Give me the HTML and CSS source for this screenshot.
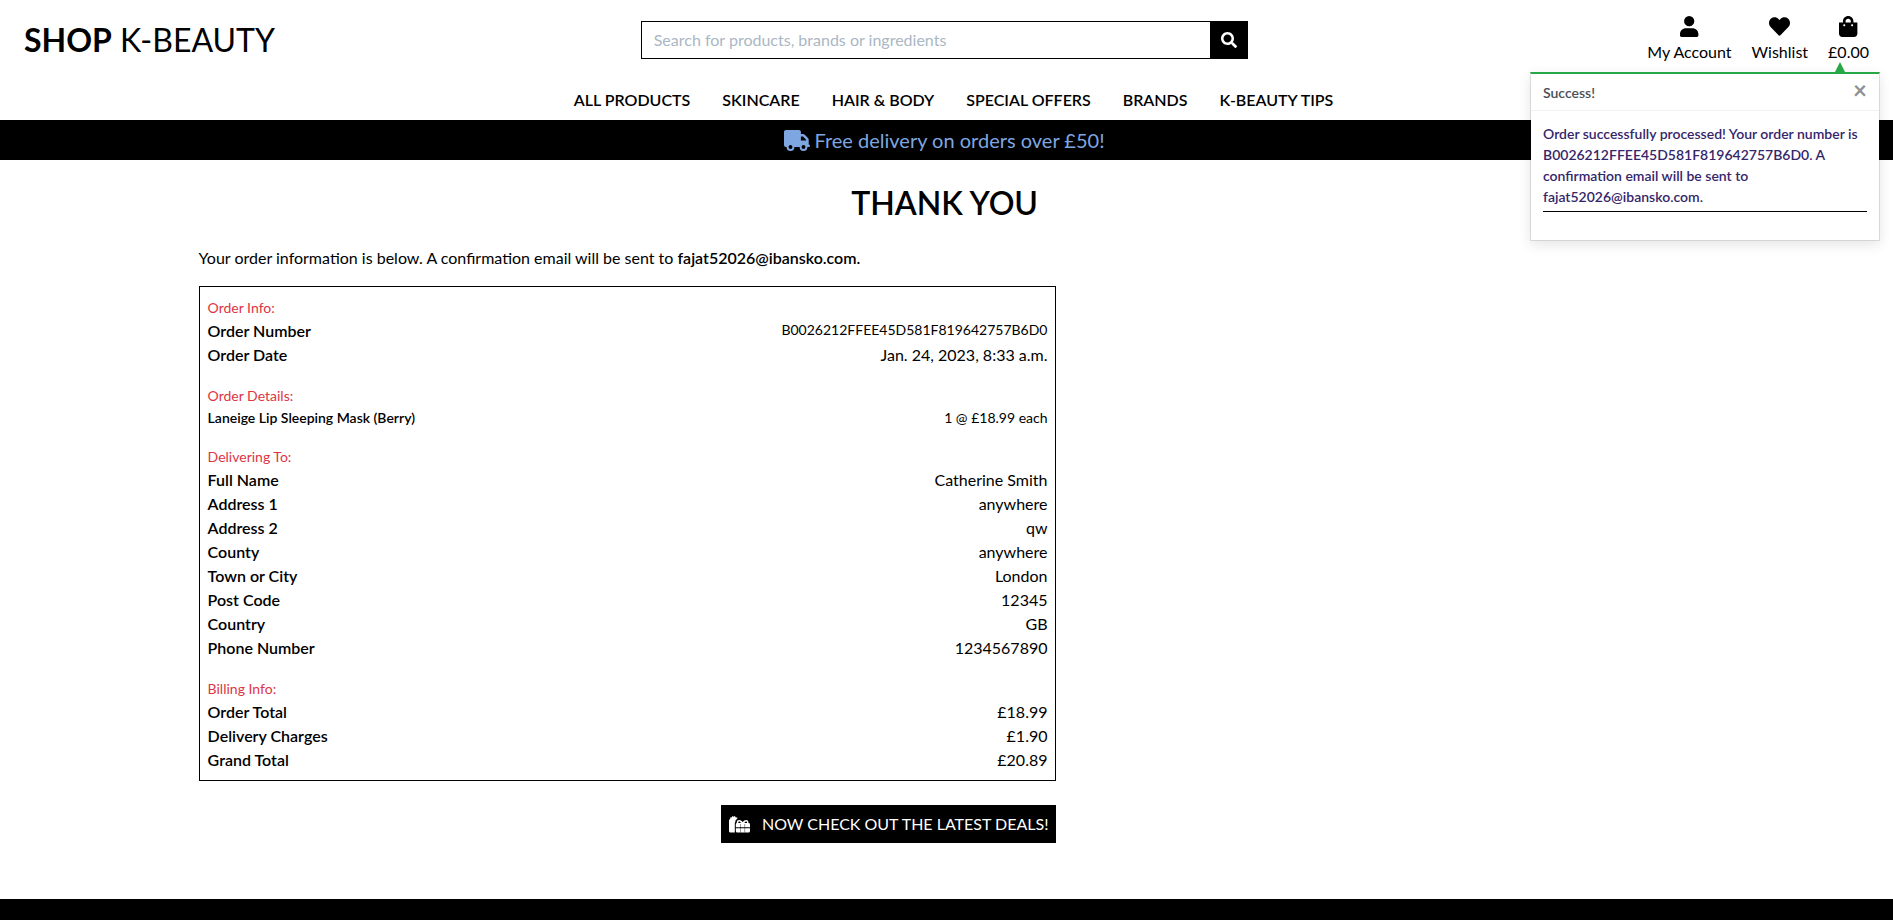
FILE: index.html
```html
<!DOCTYPE html>
<html lang="en">
<head>
<meta charset="utf-8">
<title>Shop K-Beauty</title>
<link rel="stylesheet" href="styles.css">
</head>
<body>
<header class="site-header">
  <div class="topbar">
    <a class="logo" href="#"><strong>SHOP</strong> K-BEAUTY</a>
    <form class="search">
      <input class="search-input" type="text" aria-label="Search" placeholder="Search for products, brands or ingredients">
      <button class="search-button" type="button" aria-label="Search">
        <svg class="icon-search" viewBox="0 0 512 512"><path d="M505 442.7L405.3 343c-4.500-4.500-10.600-7-17-7H372c27.600-35.300 44-79.700 44-128C416 93.100 322.900 0 208 0S0 93.100 0 208s93.100 208 208 208c48.300 0 92.700-16.400 128-44v16.300c0 6.400 2.500 12.500 7 17l99.700 99.700c9.400 9.400 24.600 9.400 33.900 0l28.300-28.300c9.400-9.400 9.400-24.600.1-34zM208 336c-70.700 0-128-57.200-128-128 0-70.700 57.200-128 128-128 70.700 0 128 57.200 128 128 0 70.700-57.200 128-128 128z"/></svg>
      </button>
    </form>
    <div class="account-links">
      <a class="account-link" href="#">
        <svg class="icon-account" viewBox="0 0 448 512"><path d="M224 250a125 125 0 1 0 0-250 125 125 0 1 0 0 250zM150 296C60 296 0 356 0 440v38c0 20 14 34 34 34h380c20 0 34-14 34-34v-38c0-84-60-144-150-144z"/></svg>
        <span>My Account</span>
      </a>
      <a class="account-link" href="#">
        <svg class="icon-account" viewBox="0 0 512 512"><path d="M462.300 62.600C407.500 15.900 326 24.300 275.700 76.200L256 96.500l-19.700-20.300C186.100 24.300 104.500 15.900 49.700 62.600c-62.800 53.600-66.100 149.800-9.900 207.900l193.500 199.800c12.500 12.900 32.800 12.900 45.300 0l193.500-199.800c56.300-58.100 53-154.300-9.800-207.900z"/></svg>
        <span>Wishlist</span>
      </a>
      <a class="account-link" href="#">
        <svg class="icon-account" viewBox="0 0 448 512"><path d="M352 160v-32C352 57.400 294.600 0 224 0 153.400 0 96 57.400 96 128v32H0v272c0 44.200 35.800 80 80 80h288c44.200 0 80-35.800 80-80V160h-96zm-192-32c0-35.300 28.700-64 64-64s64 28.700 64 64v32H160v-32zm160 120c-13.300 0-24-10.700-24-24s10.700-24 24-24 24 10.700 24 24-10.700 24-24 24zm-192 0c-13.300 0-24-10.700-24-24s10.700-24 24-24 24 10.700 24 24-10.700 24-24 24z"/></svg>
        <span>£0.00</span>
      </a>
    </div>
  </div>
  <nav class="main-nav">
    <a href="#">ALL PRODUCTS</a>
    <a href="#">SKINCARE</a>
    <a href="#">HAIR &amp; BODY</a>
    <a href="#">SPECIAL OFFERS</a>
    <a href="#">BRANDS</a>
    <a href="#">K-BEAUTY TIPS</a>
  </nav>
  <section class="toast" role="alert">
    <div class="toast-header">
      <span>Success!</span>
      <button class="toast-close" type="button" aria-label="Close">×</button>
    </div>
    <div class="toast-body">
      <p>Order successfully processed! Your order number is B0026212FFEE45D581F819642757B6D0. A confirmation email will be sent to fajat52026@ibansko.com.</p>
    </div>
  </section>
</header>

<div class="banner">
  <svg class="icon-truck" viewBox="0 0 640 512"><path fill-rule="evenodd" d="M48 0C21.500 0 0 21.500 0 48v320c0 26.500 21.500 48 48 48h16a96 96 0 0 0 192 0h128a96 96 0 0 0 192 0h32c17.700 0 32-14.300 32-32s-14.300-32-32-32V237.300c0-17-6.700-33.200-18.700-45.200L512 114.700C500 102.700 483.700 96 466.700 96H416V48c0-26.500-21.500-48-48-48zM416 160h50.700L544 237.300V256H416zM160 368a48 48 0 1 1 0 96 48 48 0 1 1 0-96zM480 368a48 48 0 1 1 0 96 48 48 0 1 1 0-96z"/></svg>
  <span>Free delivery on orders over £50!</span>
</div>

<main class="content">
  <h1 class="page-title">THANK YOU</h1>
  <div class="order-column">
    <p class="intro">Your order information is below. A confirmation email will be sent to <strong>fajat52026@ibansko.com.</strong></p>
    <div class="order-box">
      <section>
        <h2>Order Info:</h2>
        <dl>
          <div class="row"><dt>Order Number</dt><dd class="small">B0026212FFEE45D581F819642757B6D0</dd></div>
          <div class="row"><dt>Order Date</dt><dd>Jan. 24, 2023, 8:33 a.m.</dd></div>
        </dl>
      </section>
      <section>
        <h2>Order Details:</h2>
        <dl>
          <div class="row small"><dt>Laneige Lip Sleeping Mask (Berry)</dt><dd>1 @ £18.99 each</dd></div>
        </dl>
      </section>
      <section>
        <h2>Delivering To:</h2>
        <dl>
          <div class="row"><dt>Full Name</dt><dd>Catherine Smith</dd></div>
          <div class="row"><dt>Address 1</dt><dd>anywhere</dd></div>
          <div class="row"><dt>Address 2</dt><dd>qw</dd></div>
          <div class="row"><dt>County</dt><dd>anywhere</dd></div>
          <div class="row"><dt>Town or City</dt><dd>London</dd></div>
          <div class="row"><dt>Post Code</dt><dd>12345</dd></div>
          <div class="row"><dt>Country</dt><dd>GB</dd></div>
          <div class="row"><dt>Phone Number</dt><dd>1234567890</dd></div>
        </dl>
      </section>
      <section>
        <h2>Billing Info:</h2>
        <dl>
          <div class="row"><dt>Order Total</dt><dd>£18.99</dd></div>
          <div class="row"><dt>Delivery Charges</dt><dd>£1.90</dd></div>
          <div class="row"><dt>Grand Total</dt><dd>£20.89</dd></div>
        </dl>
      </section>
    </div>
    <a class="deals" href="#">
      <svg class="icon-gifts" viewBox="0 0 21 17"><path d="M0 4.500q0-1.500 1.300-1.500l-.3-1.600 1.600.1L3.500 0l1.200.8L5.900 0l.9 1.500 1.600-.1-.3 1.600q-1.900.8-1.800 2.900Q5.800 6.500 5.800 8v8.500H1.500Q0 16.500 0 15z"/><path fill-rule="evenodd" d="M6.800 11.300V8.500q0-1.200 1-1.400-.4-3.100 2.400-3.100 2 0 3.400 2 1.600-2 3.500-2 2.600 0 2.300 3.100 1.600 0 1.600 1.400v2.800zM9.300 6.900h2.600Q11.200 5.600 10.200 5.600q-1.100 0-.9 1.300zM15.400 6.900h2.700q.2-1.300-1-1.300-1 0-1.700 1.300zM6.800 12.300H21V15q0 1.500-1.500 1.500H8.300q-1.500 0-1.500-1.500z"/><path class="ribbon" d="M11.500 8v8.500M15.700 8v8.500"/></svg>
      <span>NOW CHECK OUT THE LATEST DEALS!</span>
    </a>
  </div>
</main>
<footer class="site-footer"></footer>
</body>
</html>
```

FILE: styles.css
```css
* { box-sizing: border-box; }

body {
  margin: 0;
  min-height: 100vh;
  display: flex;
  flex-direction: column;
  font-family: Lato, sans-serif;
  font-size: 16px;
  line-height: 24px;
  color: #000;
  background: #fff;
}

a { color: inherit; text-decoration: none; }
svg { display: block; fill: currentColor; }

.site-header { position: relative; height: 120px; }

.topbar {
  display: grid;
  grid-template-columns: 1fr 33% 1fr;
  align-items: center;
  height: 80px;
  padding: 0 28px 0 24px;
}

.logo { font-size: 32px; line-height: 38px; font-weight: 400; }
.logo strong { font-weight: 700; }

.search { display: flex; height: 38px; }
.search-input {
  flex: 1;
  min-width: 0;
  padding: 6px 12px;
  border: 1px solid #000;
  border-right: 0;
  border-radius: 0;
  font: inherit;
}
.search-input::placeholder { color: #aab7c4; opacity: 1; }
.search-button {
  display: grid;
  place-items: center;
  width: 38px;
  padding: 0;
  border: 0;
  background: #000;
  color: #fff;
}
.icon-search { width: 16px; height: 16px; }

.account-links { display: flex; justify-content: flex-end; gap: 20px; margin-right: -4px; }
.account-link { display: flex; flex-direction: column; align-items: center; gap: 3px; }
.icon-account { height: 21px; }

.main-nav {
  display: flex;
  justify-content: center;
  gap: 32px;
  padding: 8px 0 8px 14px;
  font-weight: 600;
}

.toast {
  position: absolute;
  z-index: 2;
  top: 72px;
  right: 13px;
  width: 350px;
  border: 1px solid rgba(0, 0, 0, .1);
  border-top: 2px solid #28a745;
  background: #fff;
  background-clip: padding-box;
  box-shadow: 0 4px 12px rgba(0, 0, 0, .1);
  font-size: 14px;
  line-height: 21px;
}
.toast::before {
  content: "";
  position: absolute;
  top: -12px;
  right: 34px;
  border: 5px solid transparent;
  border-top: 0;
  border-bottom: 10px solid #28a745;
}
.toast-header {
  display: flex;
  justify-content: space-between;
  align-items: center;
  height: 37px;
  padding: 0 12px;
  border-bottom: 1px solid #f2f2f2;
  color: #495057;
  font-weight: 600;
}
.toast-close {
  padding: 0 0 4px;
  border: 0;
  background: none;
  color: #8e9194;
  font: 700 24px/24px Lato, sans-serif;
}
.toast-body { padding: 12px 12px 28px; color: #35266a; font-weight: 600; }
.toast-body p { margin: 0; padding-bottom: 4px; border-bottom: 1px solid #000; }

.banner {
  display: flex;
  justify-content: center;
  align-items: center;
  gap: 4px;
  height: 40px;
  padding-right: 4px;
  background: #000;
  color: #7ea6e0;
  font-size: 20px;
}
.icon-truck { width: 26px; height: 21px; }

.content { width: 80.4%; margin-left: 9.7%; padding: 24px 15px 56px; }
.page-title { margin: 0 0 24px; font-size: 32px; line-height: 38px; font-weight: 600; text-align: center; }
.order-column { width: 57.5%; }
.intro { margin: 0 0 16px; }
.intro strong { font-weight: 600; }

.order-box {
  display: flex;
  flex-direction: column;
  gap: 17px;
  padding: 9px 8px 8px;
  border: 1px solid #000;
}
.order-box h2 { margin: 0; color: #dc3545; font-size: 14px; line-height: 23px; font-weight: 400; }
.order-box dl { margin: 0; }
.row { display: flex; justify-content: space-between; align-items: flex-start; }
dt { font-weight: 600; }
dd { margin: 0; }
.small { font-size: 14px; line-height: 21px; }

.deals {
  display: flex;
  align-items: center;
  gap: 12px;
  width: fit-content;
  height: 38px;
  margin: 24px 0 0 auto;
  padding: 0 8px;
  background: #000;
  color: #fff;
}
.icon-gifts { width: 21px; height: 17px; }
.ribbon { fill: none; stroke: #000; stroke-width: 0.4; }

.site-footer { flex: 1; min-height: 21px; background: #000; }
```
